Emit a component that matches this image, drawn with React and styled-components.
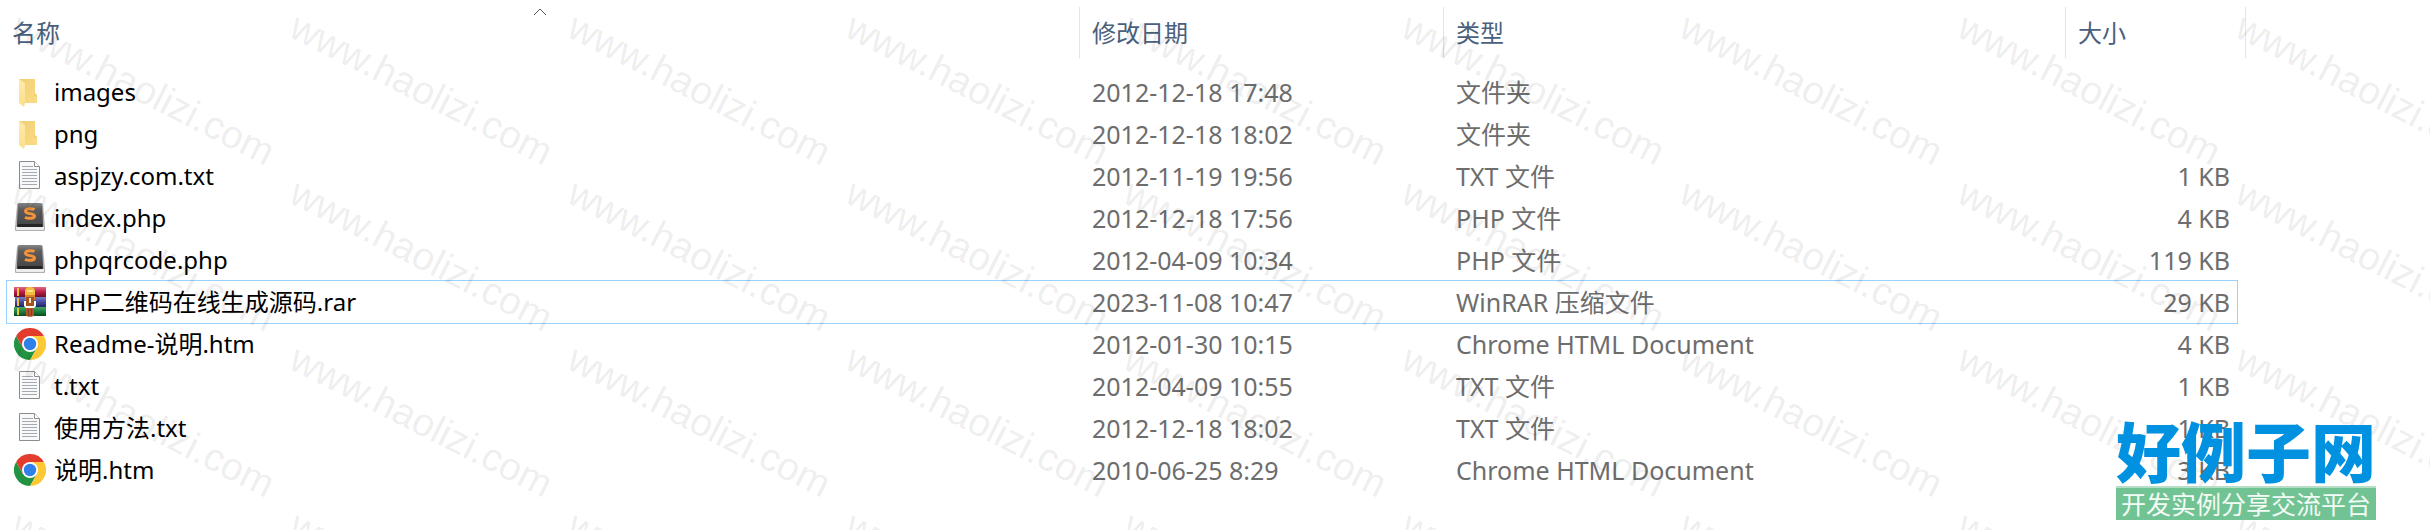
import React from "react";
import styled, { createGlobalStyle, css } from "styled-components";

const GlobalStyle = createGlobalStyle`
  *, *::before, *::after { box-sizing: border-box; }
  body {
    margin: 0;
    background: #fff;
    font-family: "Noto Sans", "Noto Sans CJK SC", sans-serif;
    font-size: 24px;
  }
`;

const Page = styled.main`
  position: relative;
  min-height: 100vh;
  padding: 7px 184px 0 0;
  overflow: hidden;
`;

const FileTable = styled.table`
  width: 100%;
  table-layout: fixed;
  border-collapse: collapse;
`;

const Column = styled.col`
  width: ${(p) => p.$width || "auto"};
`;

const HeaderCell = styled.th`
  position: relative;
  padding: 0 0 13px;
  font-weight: 400;
`;

const HeaderButton = styled.button`
  display: block;
  width: 100%;
  height: 51px;
  margin: 0;
  padding: 0 0 0 12px;
  border: 0;
  border-right: 1px solid #e3e3e3;
  background: none;
  color: #4a607c;
  font: inherit;
  line-height: 51px;
  text-align: left;
`;

const SortArrow = styled.svg`
  position: absolute;
  top: 0;
  left: 50%;
  width: 14px;
  height: 9px;
  margin-left: -7px;
`;

const Row = styled.tr`
  position: relative;
`;

const Cell = styled.td`
  height: 42px;
  padding: 0 0 0 12px;
  color: #6d6d6d;
  font-size: 25px;
  line-height: 42px;
  white-space: nowrap;
`;

const SizeCell = styled(Cell)`
  padding: 0 16px 0 0;
  text-align: right;
`;

const NameCell = styled(Cell)`
  padding: 0 0 0 14px;
  color: #000;
  font-size: 24px;
  ${(p) =>
    p.$selected &&
    css`
      &::after {
        content: "";
        position: absolute;
        inset: -1px 8px -1px 6px;
        border: 1px solid #99d1ff;
        pointer-events: none;
      }
    `}
`;

const FileName = styled.div`
  display: flex;
  align-items: center;
  gap: 8px;
`;

const Icon = styled.svg`
  flex: none;
  width: 32px;
  height: 32px;
`;

const Watermark = styled.div`
  position: absolute;
  inset: 6px -278px 0 24px;
  display: grid;
  grid-template-columns: repeat(auto-fill, 278px);
  grid-auto-rows: 166px;
  pointer-events: none;
  user-select: none;
`;

const WatermarkText = styled.span`
  width: 278px;
  color: rgba(0, 0, 0, 0.085);
  font-family: "Liberation Sans", sans-serif;
  font-size: 39px;
  line-height: 40px;
  white-space: nowrap;
  transform: rotate(27deg);
  transform-origin: 0 0;
`;

const SiteBadge = styled.aside`
  position: absolute;
  right: 54px;
  bottom: 10px;
  width: 260px;
`;

const SiteName = styled.div`
  color: #0092e0;
  font-family: "Noto Sans CJK SC", sans-serif;
  font-size: 65px;
  font-weight: 900;
  line-height: 74px;
  white-space: nowrap;
`;

const SiteSlogan = styled.div`
  height: 34px;
  border-top: 2px solid #b4dfc6;
  background: #72c393;
  color: #f2fbf5;
  font-family: "Noto Sans CJK SC", sans-serif;
  font-size: 25px;
  line-height: 30px;
  text-align: center;
  white-space: nowrap;
`;

function FolderIcon() {
  return (
    <Icon viewBox="0 0 32 32" aria-hidden="true">
      <defs>
        <linearGradient id="folderBack" x1="0" y1="0" x2="1" y2="1">
          <stop offset="0" stopColor="#efd07a" />
          <stop offset="0.5" stopColor="#f5d67f" />
          <stop offset="1" stopColor="#fbdc83" />
        </linearGradient>
        <linearGradient id="folderFront" x1="0" y1="0" x2="0" y2="1">
          <stop offset="0" stopColor="#ffeaa8" />
          <stop offset="1" stopColor="#fbdf8d" />
        </linearGradient>
      </defs>
      <path d="M5 3h16v14l2 2v8H5z" fill="url(#folderBack)" />
      <path d="M5 3l6 4v20l-1 4-5-4z" fill="url(#folderFront)" />
      <path d="M20.500 17v3l2 -1z" fill="#eac463" />
    </Icon>
  );
}

function TextIcon() {
  return (
    <Icon viewBox="0 0 32 32" aria-hidden="true">
      <path d="M5.500 1.500h15l5 5v22h-20z" fill="#f8f9fb" stroke="#8c8c8c" />
      <path d="M20.500 1.500v5h5" fill="#fff" stroke="#8c8c8c" />
      <path
        d="M8 6.500h11M8 9.500h15M8 12.500h15M8 15.500h15M8 18.500h15M8 21.500h15M8 24.500h15"
        stroke="#a6a9ad"
      />
    </Icon>
  );
}

function SublimeIcon() {
  return (
    <Icon viewBox="0 0 32 32" aria-hidden="true">
      <defs>
        <linearGradient id="keyTop" x1="0" y1="0" x2="0" y2="1">
          <stop offset="0" stopColor="#858585" />
          <stop offset="0.3" stopColor="#5c5c5c" />
          <stop offset="1" stopColor="#484848" />
        </linearGradient>
      </defs>
      <path d="M5 1h22q2 0 2 2l2 22v3q0 1-1 1H2q-1 0-1-1v-3L3 3q0-2 2-2z" fill="#b0b0b0" />
      <path d="M2 25h28v2q0 1-1 1H3q-1 0-1-1z" fill="#ececec" />
      <path d="M4 18h24l1 6q0 1-1 1H4q-1 0-1-1z" fill="#252525" />
      <path d="M6 1h20q2 0 2 2l1 18q0 1-1 1H4q-1 0-1-1L4 3q0-2 2-2z" fill="url(#keyTop)" />
      <path
        d="M20.500 7.500c-2-1.200-8.500-1.500-9 1.500-.4 3.600 9 1.700 9 5 0 3-7 2.700-9.500 1.300"
        fill="none"
        stroke="#f5933a"
        strokeWidth="3"
      />
    </Icon>
  );
}

function RarIcon() {
  return (
    <Icon viewBox="0 0 32 32" aria-hidden="true">
      <defs>
        <linearGradient id="bookRed" x1="0" y1="0" x2="0" y2="1">
          <stop offset="0" stopColor="#e06a8b" />
          <stop offset="0.5" stopColor="#b91d46" />
          <stop offset="1" stopColor="#6c0f26" />
        </linearGradient>
        <linearGradient id="bookBlue" x1="0" y1="0" x2="0" y2="1">
          <stop offset="0" stopColor="#7b7fc6" />
          <stop offset="0.5" stopColor="#4449a0" />
          <stop offset="1" stopColor="#202460" />
        </linearGradient>
        <linearGradient id="bookGreen" x1="0" y1="0" x2="0" y2="1">
          <stop offset="0" stopColor="#4aa568" />
          <stop offset="0.5" stopColor="#1c7f3c" />
          <stop offset="1" stopColor="#0a4a1e" />
        </linearGradient>
      </defs>
      <path d="M0 1h32v10H0z" fill="url(#bookRed)" />
      <path d="M1 11h31v10H1z" fill="url(#bookBlue)" />
      <path d="M0 21h32v9H0z" fill="url(#bookGreen)" />
      <path d="M3 2h2v8H3zM3 12h2v8H3zM3 22h2v7H3z" fill="#f0c23c" />
      <path d="M11 5q0-4 5-4t5 4v6H11z" fill="#f3bd3c" />
      <path d="M13 4h6v2h-6z" fill="#ffe391" />
      <path d="M11 9h10v5H11z" fill="#d9822b" />
      <path d="M10 15h3v-2h6v2h3v5l-2 2h-8l-2-2z" fill="#fff" />
      <path d="M12 11h8v9h-8z" fill="#a3511f" />
      <path d="M15 12h2v5h-2z" fill="#f6e3c0" />
      <path d="M12 22h8v8l-4 1-4-1z" fill="#b4532a" />
      <path d="M14 23h1v7h-1zM17 23h1v7h-1z" fill="#8c3b1a" />
    </Icon>
  );
}

function ChromeIcon() {
  return (
    <Icon viewBox="0 0 32 32" aria-hidden="true">
      <path d="M2.140 8A16 16 0 0 0 16 32l6.930-12H9.070z" fill="#229342" />
      <path d="M2.140 8A16 16 0 0 1 29.860 8H16l-6.930 12z" fill="#e33b2e" />
      <path d="M16 8h13.860A16 16 0 0 1 16 32l6.930-12z" fill="#fcc934" />
      <circle cx="16" cy="16" r="8" fill="#fff" />
      <circle cx="16" cy="16" r="6.200" fill="#3080ea" />
    </Icon>
  );
}

const icons = {
  folder: FolderIcon,
  text: TextIcon,
  php: SublimeIcon,
  rar: RarIcon,
  chrome: ChromeIcon,
};

const columns = ["名称", "修改日期", "类型", "大小"];

const files = [
  { icon: "folder", name: "images", date: "2012-12-18 17:48", type: "文件夹", size: "" },
  { icon: "folder", name: "png", date: "2012-12-18 18:02", type: "文件夹", size: "" },
  { icon: "text", name: "aspjzy.com.txt", date: "2012-11-19 19:56", type: "TXT 文件", size: "1 KB" },
  { icon: "php", name: "index.php", date: "2012-12-18 17:56", type: "PHP 文件", size: "4 KB" },
  { icon: "php", name: "phpqrcode.php", date: "2012-04-09 10:34", type: "PHP 文件", size: "119 KB" },
  { icon: "rar", name: "PHP二维码在线生成源码.rar", date: "2023-11-08 10:47", type: "WinRAR 压缩文件", size: "29 KB", selected: true },
  { icon: "chrome", name: "Readme-说明.htm", date: "2012-01-30 10:15", type: "Chrome HTML Document", size: "4 KB" },
  { icon: "text", name: "t.txt", date: "2012-04-09 10:55", type: "TXT 文件", size: "1 KB" },
  { icon: "text", name: "使用方法.txt", date: "2012-12-18 18:02", type: "TXT 文件", size: "1 KB" },
  { icon: "chrome", name: "说明.htm", date: "2010-06-25 8:29", type: "Chrome HTML Document", size: "3 KB" },
];

function FileRow({ file }) {
  const FileIcon = icons[file.icon];
  return (
    <Row aria-selected={file.selected}>
      <NameCell $selected={file.selected}>
        <FileName>
          <FileIcon />
          {file.name}
        </FileName>
      </NameCell>
      <Cell>{file.date}</Cell>
      <Cell>{file.type}</Cell>
      <SizeCell>{file.size}</SizeCell>
    </Row>
  );
}

export default function App() {
  return (
    <Page>
      <GlobalStyle />
      <FileTable>
        <colgroup>
          <Column />
          <Column $width="364px" />
          <Column $width="622px" />
          <Column $width="180px" />
        </colgroup>
        <thead>
          <tr>
            {columns.map((label, i) => (
              <HeaderCell key={label} scope="col" aria-sort={i === 0 ? "ascending" : undefined}>
                <HeaderButton type="button">{label}</HeaderButton>
                {i === 0 && (
                  <SortArrow viewBox="0 0 14 9" aria-hidden="true">
                    <path d="M1 8l6-6 6 6" fill="none" stroke="#5a5a5a" />
                  </SortArrow>
                )}
              </HeaderCell>
            ))}
          </tr>
        </thead>
        <tbody>
          {files.map((file) => (
            <FileRow key={file.name} file={file} />
          ))}
        </tbody>
      </FileTable>
      <Watermark aria-hidden="true">
        {Array.from({ length: 36 }, (_, i) => (
          <WatermarkText key={i}>www.haolizi.com</WatermarkText>
        ))}
      </Watermark>
      <SiteBadge>
        <SiteName>好例子网</SiteName>
        <SiteSlogan>开发实例分享交流平台</SiteSlogan>
      </SiteBadge>
    </Page>
  );
}
